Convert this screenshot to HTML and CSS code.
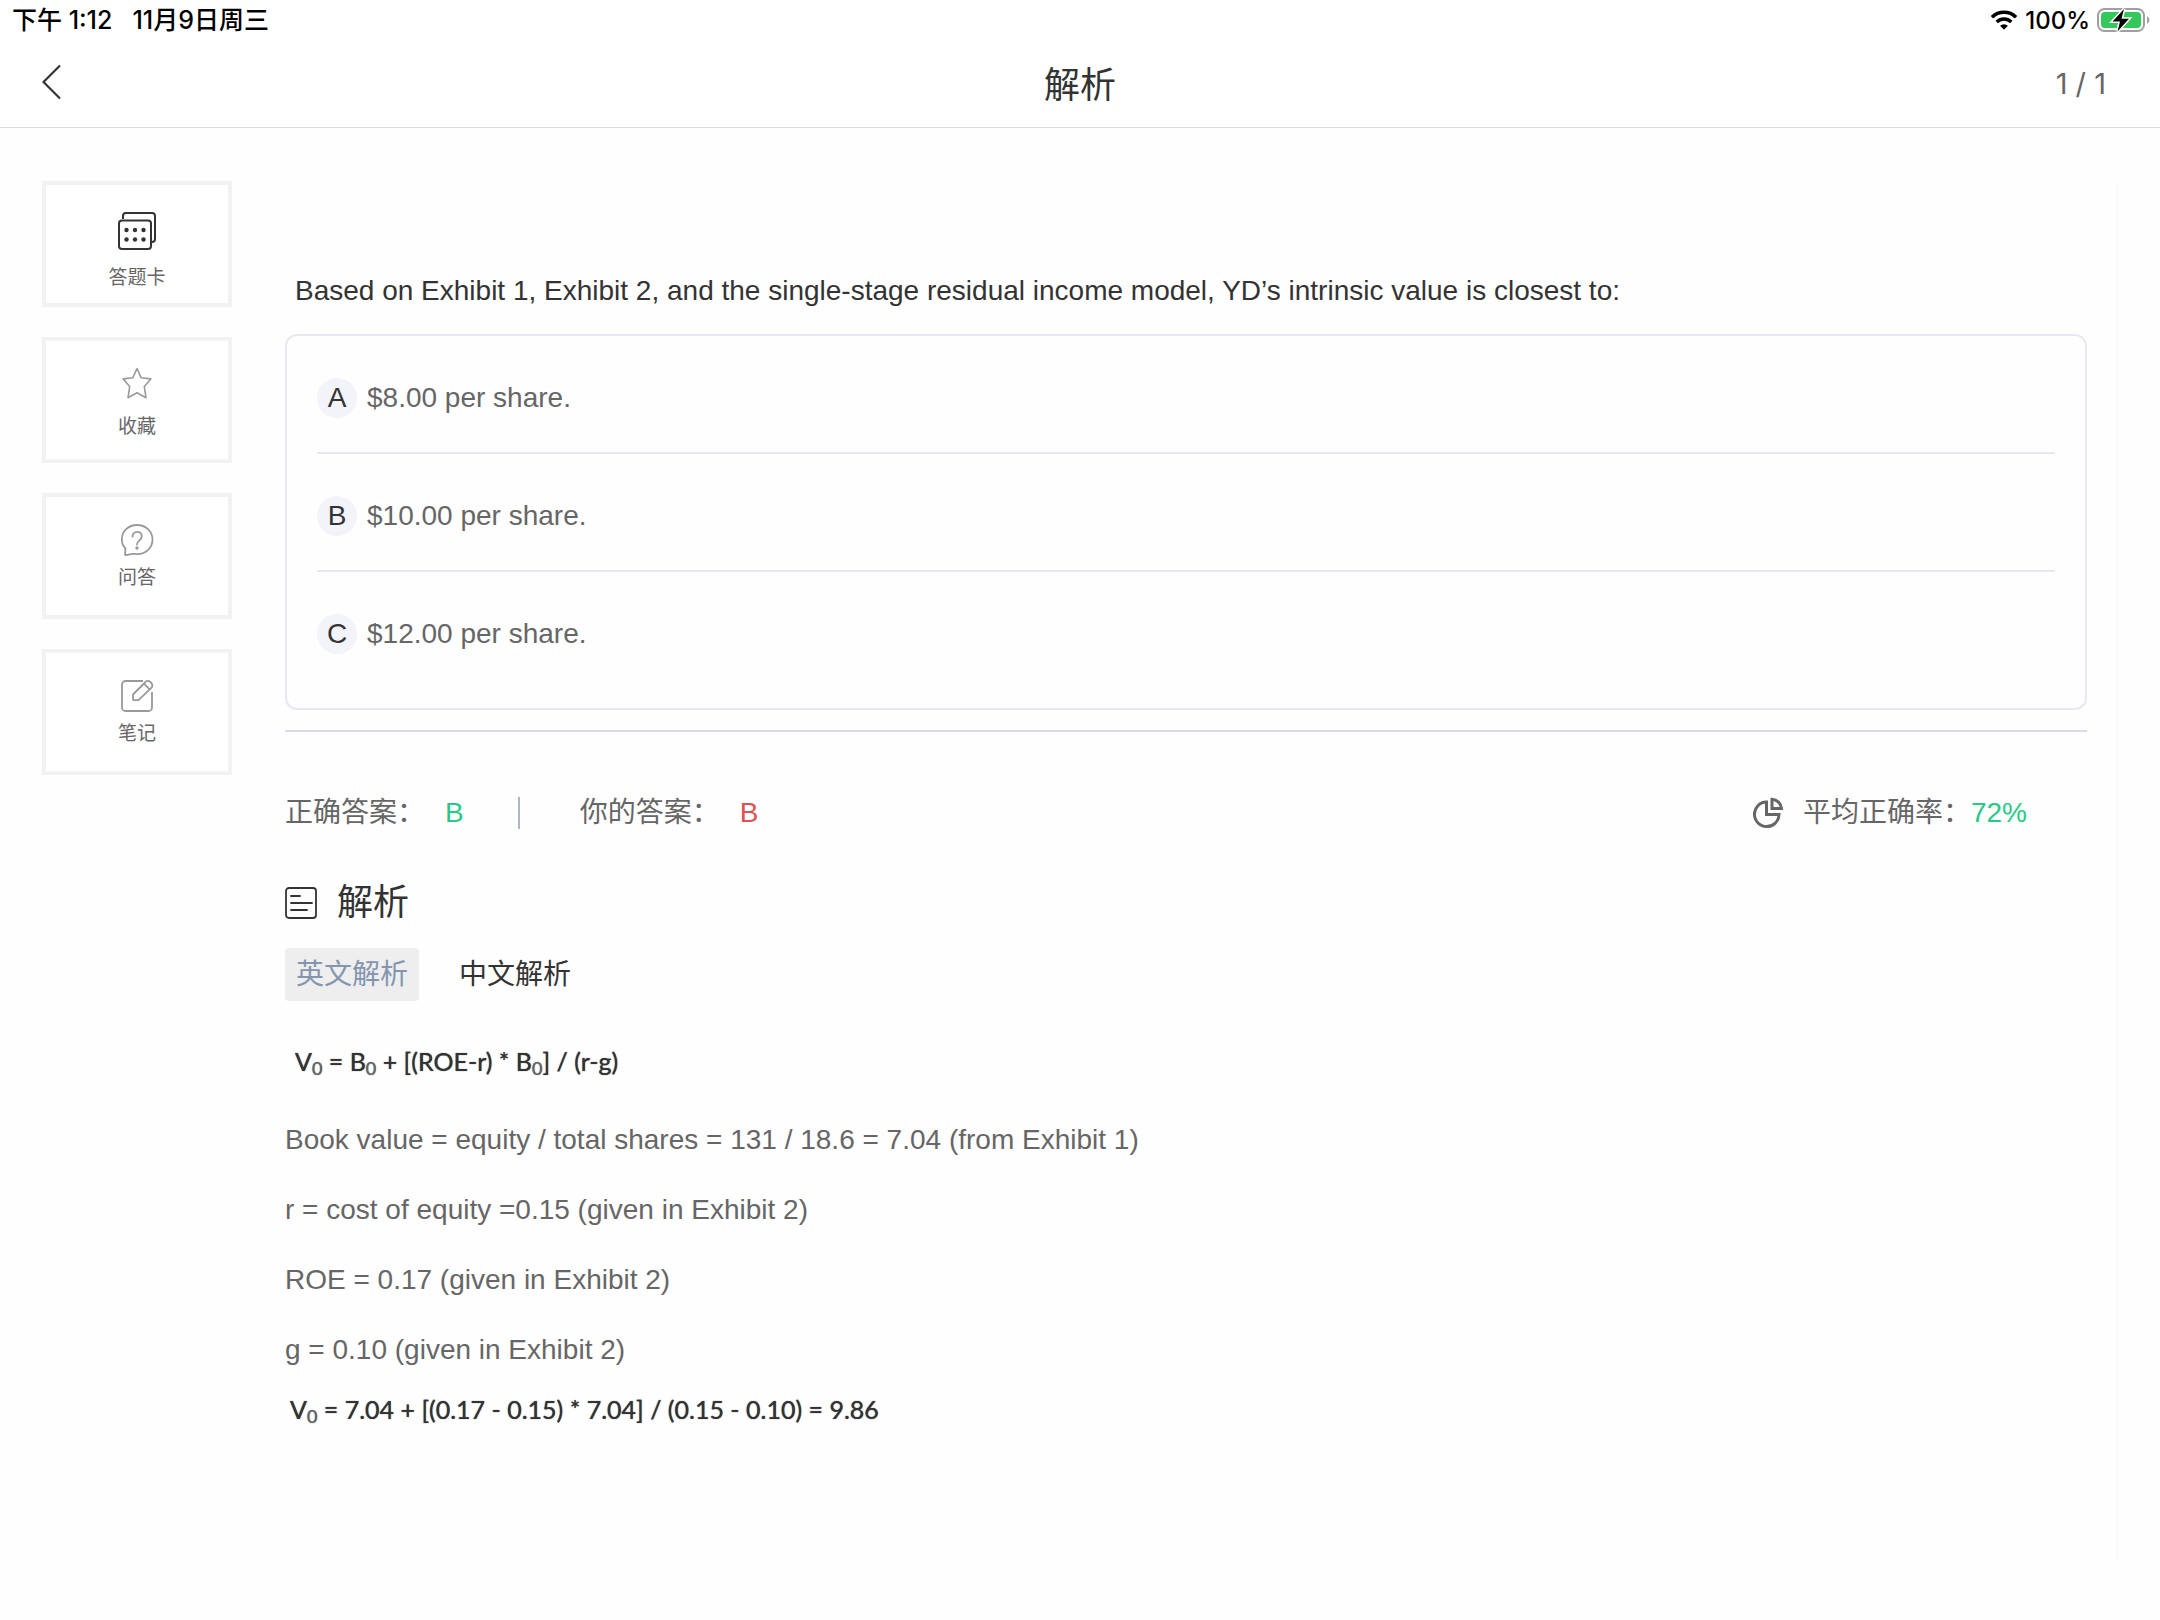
FILE: index.html
```html
<!DOCTYPE html>
<html lang="zh-CN">
<head>
  <meta charset="UTF-8">
  <meta name="viewport" content="width=device-width, initial-scale=1.0">
  <title>解析</title>
  <link rel="stylesheet" href="styles.css">
</head>
<body>
  <div class="status-bar">
    <div class="status-left">
      <span>下午 1:12</span>
      <span>11月9日周三</span>
    </div>
    <div class="status-right">
      <svg class="wifi" width="28" height="20" viewBox="0 0 28 20">
        <path d="M2 7.2a17 17 0 0 1 24 0" fill="none" stroke="#000" stroke-width="3.6"/>
        <path d="M6.7 12a10.4 10.4 0 0 1 14.6 0" fill="none" stroke="#000" stroke-width="3.4"/>
        <path d="M14 19.8l-3.9-4a5.6 5.6 0 0 1 7.8 0z"/>
      </svg>
      <span>100%</span>
      <svg class="battery" width="54" height="26" viewBox="0 0 54 26">
        <rect x="1" y="2" width="46" height="22" rx="6.5" fill="none" stroke="#a0a0a0" stroke-width="2"/>
        <rect x="4" y="5" width="40" height="16" rx="4" fill="#34c759"/>
        <path d="M50 9a4.5 4.5 0 0 1 0 8z" fill="#a0a0a0"/>
        <path d="M27 2L15.5 14.5h7.5L20.5 24.5 32 11.800h-7.5z" fill="#000" stroke="#fff" stroke-width="3" paint-order="stroke"/>
      </svg>
    </div>
  </div>

  <header>
    <button class="back-button" aria-label="返回">
      <svg width="20" height="36" viewBox="0 0 20 36">
        <path d="M18 1.5L1.5 18 18 34.5" fill="none" stroke="#333" stroke-width="2.2"/>
      </svg>
    </button>
    <h1>解析</h1>
    <span class="page-count">1 / 1</span>
  </header>

  <main>
    <nav class="sidebar">
      <button class="side-card sheet">
        <svg width="40" height="40" viewBox="0 0 40 40" fill="none" stroke="#333" stroke-width="2">
          <path d="M6 8V5a3 3 0 0 1 3-3h26a3 3 0 0 1 3 3v23a3 3 0 0 1-3 3h-2"/>
          <rect x="2" y="9.5" width="32" height="28.5" rx="3"/>
          <g fill="#333" stroke="none">
            <circle cx="9.5" cy="19" r="2.2"/><circle cx="18" cy="19" r="2.2"/><circle cx="26.5" cy="19" r="2.2"/>
            <circle cx="9.5" cy="28.5" r="2.2"/><circle cx="18" cy="28.5" r="2.2"/><circle cx="26.5" cy="28.5" r="2.2"/>
          </g>
        </svg>
        <span>答题卡</span>
      </button>
      <button class="side-card favorite">
        <svg width="40" height="40" viewBox="-4 -4 40 40" fill="none" stroke="#999" stroke-width="1.6" stroke-linejoin="round">
          <path d="M16 0.5l4.2 9.3 9.6 1.1-6.5 7.6 1.7 11.2-9-5-9 5 1.7-11.2-6.5-7.6 9.6-1.1z"/>
        </svg>
        <span>收藏</span>
      </button>
      <button class="side-card">
        <svg width="40" height="40" viewBox="-3 -3 40 40" fill="none" stroke="#999" stroke-width="1.8" stroke-linejoin="round" stroke-linecap="round">
          <path d="M5.500 25.500C2.800 22.800 1.800 19.800 1.800 16.500 1.800 8.400 8.300 2 17 2s15.500 6.200 15.500 14.500S26 31.200 17.500 31.200c-2 0-3.500-.4-5-.4L6 32.200c-.7.1-1-.3-1-.9z"/>
          <path d="M12.500 13.500c0-2.900 1.900-4.700 4.600-4.700s4.700 1.800 4.700 4.400c0 2.200-1.200 3.200-2.600 4.400-1.400 1.100-2.200 2-2.200 3.900"/>
          <circle cx="17" cy="25" r="0.8" fill="#999"/>
        </svg>
        <span>问答</span>
      </button>
      <button class="side-card">
        <svg width="40" height="40" viewBox="-3 -3 40 40" fill="none" stroke="#999" stroke-width="1.8" stroke-linejoin="round">
          <path d="M23 2H5.500A3.500 3.500 0 0 0 2 5.500v23A3.500 3.500 0 0 0 5.500 32h23a3.500 3.500 0 0 0 3.500-3.500V13"/>
          <path d="M13 20.500v-5L25.500 3a3.300 3.300 0 0 1 4.800 0l1 1a3.300 3.300 0 0 1 0 4.800L18.500 21.200H13.800z"/>
          <path d="M24 4.700l5.700 5.700"/>
        </svg>
        <span>笔记</span>
      </button>
    </nav>

    <section class="content">
      <p class="question">Based on Exhibit 1, Exhibit 2, and the single-stage residual income model, YD’s intrinsic value is closest to:</p>

      <ul class="options">
        <li><span class="letter">A</span>$8.00 per share.</li>
        <li><span class="letter">B</span>$10.00 per share.</li>
        <li><span class="letter">C</span>$12.00 per share.</li>
      </ul>

      <div class="answer-row">
        <span>正确答案：</span>
        <span class="answer correct">B</span>
        <span class="answer-divider"></span>
        <span>你的答案：</span>
        <span class="answer wrong">B</span>
        <div class="accuracy">
          <svg width="32" height="32" viewBox="0 0 32 32" fill="none" stroke="#666" stroke-width="3">
            <path d="M13.500 5A12.300 12.300 0 1 0 26 17.500H13.500z"/>
            <path d="M19 2.300A10 10 0 0 1 28.500 11.500H19z"/>
          </svg>
          <span>平均正确率：</span>
          <span class="correct">72%</span>
        </div>
      </div>

      <h2>
        <svg width="32" height="32" viewBox="0 0 32 32" fill="none" stroke="#333" stroke-width="1.8">
          <rect x="1" y="1" width="30" height="30" rx="3"/>
          <path d="M6 9h9M6 16h21M6 23h16" stroke-linecap="round"/>
        </svg>
        解析
      </h2>

      <div class="tabs">
        <button class="tab active">英文解析</button>
        <button class="tab">中文解析</button>
      </div>

      <div class="analysis">
        <p class="formula first">V<sub>0</sub> = B<sub>0</sub> + [(ROE-r) * B<sub>0</sub>] / (r-g)</p>
        <p>Book value = equity / total shares = 131 / 18.6 = 7.04 (from Exhibit 1)</p>
        <p>r = cost of equity =0.15 (given in Exhibit 2)</p>
        <p>ROE = 0.17 (given in Exhibit 2)</p>
        <p>g = 0.10 (given in Exhibit 2)</p>
        <p class="formula">V<sub>0</sub> = 7.04 + [(0.17 - 0.15) * 7.04] / (0.15 - 0.10) = 9.86</p>
      </div>
    </section>
  </main>
</body>
</html>
```
FILE: styles.css
```css
:root {
  --text-color: #333;
  --gray: #666;
  --line: #e8e8f0;
  --green: #26c987;
  --red: #e05050;
}

* {
  margin: 0;
  padding: 0;
  box-sizing: border-box;
}

body {
  display: flex;
  flex-direction: column;
  min-height: 100vh;
  font-family: "Liberation Sans", "Noto Sans CJK SC", sans-serif;
  font-size: 28px;
  color: var(--gray);
  background-color: #fefefe;
}

svg {
  display: block;
  flex: none;
}

button {
  border: none;
  background: none;
  font: inherit;
  color: inherit;
  cursor: pointer;
}

/* Status bar */
.status-bar {
  display: flex;
  justify-content: space-between;
  align-items: center;
  height: 40px;
  padding: 0 9px 0 12px;
  background-color: white;
  color: black;
  font-family: Inter, "Noto Sans CJK SC", sans-serif;
  font-size: 24px;
  font-weight: 500;
}

.status-left {
  display: flex;
  gap: 20px;
  padding-bottom: 4px;
  font-size: 25px;
}

.status-right {
  display: flex;
  align-items: center;
  gap: 7px;
}

/* Header */
header {
  display: grid;
  grid-template-columns: 1fr auto 1fr;
  align-items: center;
  height: 88px;
  padding: 0 42px 4px;
  background-color: white;
  border-bottom: 1px solid #dcdcdc;
}

.back-button {
  justify-self: start;
}

h1, h2 {
  font-size: 36px;
  font-weight: 400;
  color: var(--text-color);
}

.page-count {
  justify-self: end;
  padding: 4px 12px 0 0;
  font-family: Inter, sans-serif;
  font-size: 29px;
}

/* Layout */
main {
  flex: 1;
  display: flex;
  gap: 53px;
  padding: 53px 42px 56px;
}

.sidebar {
  display: flex;
  flex-direction: column;
  gap: 30px;
  width: 190px;
}

.side-card {
  display: flex;
  flex-direction: column;
  align-items: center;
  gap: 4px;
  height: 126px;
  padding-top: 23px;
  border: 4px solid #f2f2f2;
  background-color: white;
  font-size: 19px;
  line-height: 28px;
}

.side-card.favorite {
  gap: 9px;
}

.side-card.sheet {
  gap: 13px;
  padding-top: 26px;
}

.content {
  flex: 1;
  padding: 92px 30px 0 0;
  border-right: 1px solid #f8f8f8;
}

.question {
  padding-left: 10px;
  margin-bottom: 25px;
  line-height: 36px;
  color: var(--text-color);
}

/* Options */
.options {
  list-style: none;
  padding: 0 30px;
  border: 2px solid var(--line);
  border-radius: 12px;
}

.options li {
  display: flex;
  align-items: center;
  gap: 10px;
  padding: 42px 0 34px;
  border-bottom: 2px solid var(--line);
}

.options li:last-child {
  padding-bottom: 54px;
  border-bottom: none;
}

.letter {
  width: 40px;
  height: 40px;
  border-radius: 50%;
  background-color: #f3f4f9;
  color: var(--text-color);
  line-height: 40px;
  text-align: center;
}

/* Answers */
.answer-row {
  display: flex;
  align-items: center;
  margin-top: 20px;
  padding: 61px 60px 0 0;
  border-top: 2px solid #d9dbe8;
  line-height: 40px;
}

.answer {
  margin-left: 20px;
}

.answer-divider {
  width: 2px;
  height: 32px;
  margin: 0 60px 0 54px;
  background-color: #b0b5c4;
}

.correct {
  color: var(--green);
}

.wrong {
  color: var(--red);
}

.accuracy {
  display: flex;
  align-items: center;
  margin-left: auto;
}

.accuracy svg {
  margin-right: 18px;
}

h2 {
  display: flex;
  align-items: center;
  gap: 20px;
  margin-top: 44px;
  line-height: 52px;
}

/* Tabs */
.tabs {
  display: flex;
  gap: 29px;
  margin-top: 19px;
}

.tab {
  padding: 0 11px;
  border-radius: 4px;
  line-height: 53px;
  color: var(--text-color);
}

.tab.active {
  background-color: #eee;
  color: #8495ae;
}

.analysis p {
  line-height: 34px;
  margin-bottom: 36px;
}

.analysis .formula {
  padding-left: 5px;
  margin-top: -11px;
  font-family: Lato, sans-serif;
  font-size: 25px;
  color: var(--text-color);
  text-shadow: 0 0 1px var(--text-color);
}

.analysis .formula.first {
  padding-left: 10px;
  margin: 43px 0 45px;
}

.formula sub {
  font-size: 18px;
  line-height: 0;
  vertical-align: -4px;
  color: var(--gray);
}
```
